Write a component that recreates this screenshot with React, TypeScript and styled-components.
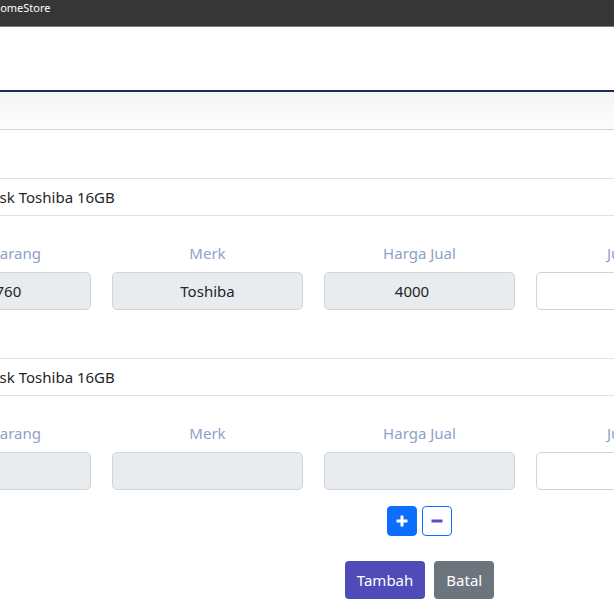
import React from "react";
import styled, { createGlobalStyle } from "styled-components";

const GlobalStyle = createGlobalStyle`
  html, body { margin: 0; padding: 0; background: #fff; overflow: hidden; }
  body { font-family: "Noto Sans", "Open Sans", sans-serif; color: #212529; }
  * { box-sizing: border-box; }
`;

const Page = styled.div`
  width: 614px;
  height: 614px;
  overflow: hidden;
  display: flex;
  flex-direction: column;
`;

const TitleBar = styled.div`
  height: 27px;
  flex: none;
  background: #363636;
  border-bottom: 1px solid #7b7b7b;
  color: #fff;
  font-size: 11px;
  line-height: 16px;
`;

const TitleText = styled.span`
  display: block;
  margin-left: -8px;
`;

const Header = styled.div`
  height: 65px;
  flex: none;
  background: #fff;
  border-bottom: 2px solid #1d2b5c;
`;

const SubHeader = styled.div`
  height: 38px;
  flex: none;
  background: linear-gradient(#f4f4f4, #fdfdfd);
  border-bottom: 1px solid #d3d3d3;
`;

const Content = styled.div`
  margin-left: -100px;
  width: 826px;
  padding-top: 48px;
  display: flex;
  flex-direction: column;
`;

const Section = styled.div`
  display: flex;
  flex-direction: column;
  margin-bottom: 48px;
`;

const NameInput = styled.input<{ $indent: number }>`
  width: 100%;
  height: 38px;
  border: 1px solid #dee2e6;
  border-left: none;
  border-right: none;
  background: #fff;
  font-family: inherit;
  font-size: 15px;
  color: #212529;
  padding: 0 0 0 ${(p) => p.$indent}px;
  outline: none;
`;

const Grid = styled.div`
  display: grid;
  grid-template-columns: repeat(4, 191px);
  column-gap: 21px;
`;

const Label = styled.div`
  text-align: center;
  color: #8fa1c6;
  font-size: 15px;
  line-height: 24px;
  margin-top: 25px;
  margin-bottom: 7px;
`;

const Field = styled.input<{ $filled?: boolean; $number?: boolean }>`
  width: 100%;
  height: 38px;
  border: 1px solid #ced4da;
  border-radius: 5px;
  background: ${(p) => (p.$filled ? "#e9ecef" : "#fff")};
  font-family: inherit;
  font-size: 15px;
  color: #212529;
  text-align: center;
  padding: 0 ${(p) => (p.$number ? 27 : 12)}px 0 12px;
  outline: none;
`;

const ControlCell = styled.div`
  grid-column: 3;
  display: flex;
  justify-content: center;
  gap: 5px;
  margin-top: 16px;
`;

const ActionCell = styled.div`
  grid-column: 3;
  display: flex;
  justify-content: center;
  gap: 9px;
  margin-top: 25px;
`;

const IconButton = styled.button<{ $solid?: boolean }>`
  width: 30px;
  height: 30px;
  padding: 0;
  border-radius: 4px;
  border: 1px solid #0d6efd;
  background: ${(p) => (p.$solid ? "#0d6efd" : "#fff")};
  display: flex;
  align-items: center;
  justify-content: center;
`;

const ActionButton = styled.button<{ $tone: string }>`
  height: 38px;
  padding: 0 12px;
  border: none;
  border-radius: 4px;
  background: ${(p) => p.$tone};
  color: #fff;
  font-family: inherit;
  font-size: 15px;
`;

type Row = { name: string; kode: string; merk: string; harga: string; last?: boolean };

const rows: Row[] = [
  { name: "Flashdisk Toshiba 16GB", kode: "992760", merk: "Toshiba", harga: "4000" },
  { name: "Flashdisk Toshiba 16GB", kode: "", merk: "", harga: "", last: true },
];

export default function App() {
  return (
    <Page>
      <GlobalStyle />
      <TitleBar>
        <TitleText>HomeStore</TitleText>
      </TitleBar>
      <Header />
      <SubHeader />
      <Content>
        {rows.map((r, i) => (
          <Section key={i}>
            <NameInput readOnly value={r.name} $indent={50} />
            <Grid>
              <Label>Kode Barang</Label>
              <Label>Merk</Label>
              <Label>Harga Jual</Label>
              <Label>Jumlah</Label>
              <Field readOnly $filled value={r.kode} />
              <Field readOnly $filled value={r.merk} />
              <Field readOnly $filled $number value={r.harga} />
              <Field readOnly value="" />
              {r.last && (
                <>
                  <ControlCell>
                    <IconButton $solid aria-label="tambah baris">
                      <svg width="14" height="14" viewBox="0 0 14 14">
                        <path d="M7 1.5v11M1.5 7h11" stroke="#fff" strokeWidth="3" />
                      </svg>
                    </IconButton>
                    <IconButton aria-label="hapus baris">
                      <svg width="14" height="14" viewBox="0 0 14 14">
                        <path d="M1.5 7h11" stroke="#5a4fc9" strokeWidth="3" />
                      </svg>
                    </IconButton>
                  </ControlCell>
                  <ActionCell>
                    <ActionButton $tone="#4f4bb8">Tambah</ActionButton>
                    <ActionButton $tone="#6c757d">Batal</ActionButton>
                  </ActionCell>
                </>
              )}
            </Grid>
          </Section>
        ))}
      </Content>
    </Page>
  );
}
